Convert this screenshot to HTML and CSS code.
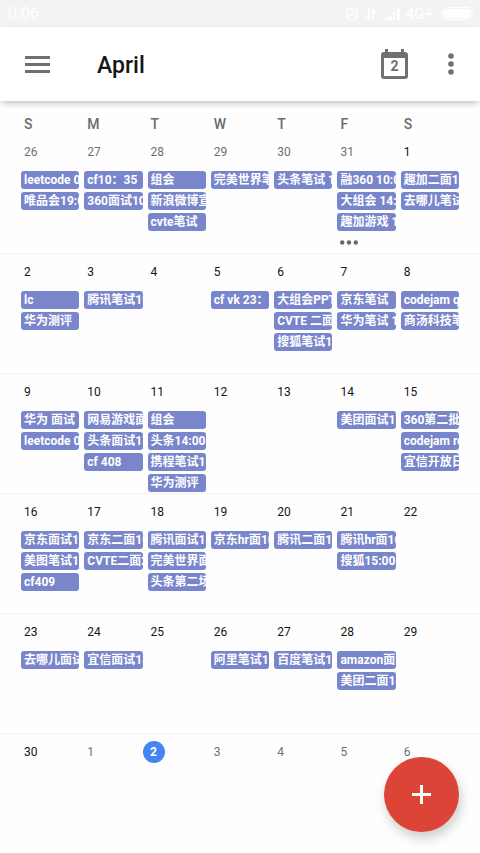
FILE: index.html
```html
<!DOCTYPE html>
<html lang="zh-CN">
<head>
<meta charset="utf-8">
<meta name="viewport" content="width=device-width, initial-scale=1">
<title>April</title>
<link rel="stylesheet" href="styles.css">
</head>
<body>
<div class="status">
  <span class="clock">0:06</span>
  <svg class="status-icon" width="14" height="16" viewBox="0 0 14 16" fill="none" stroke="currentColor" stroke-width="1.300"><circle cx="7" cy="8.500" r="5.500"/><path d="M.8 4 4 1.200M13.200 4 10 1.200M4.500 7.500 7 9.500 10 7"/></svg>
  <svg class="status-icon" width="12" height="14" viewBox="0 0 12 14" fill="currentColor"><path d="M3 1h2v12L0 9h3zM7 13h2V5h3L7 1z"/></svg>
  <svg class="status-icon" width="17" height="14" viewBox="0 0 17 14" fill="currentColor"><path d="M0 13v-1l3-1v2zM4 13v-3h2v3zM7 13V8h2v5zM10 13V5h2v8zM14 13V2h3v11z"/></svg>
  <span class="network">4G+</span>
  <svg class="battery" width="32" height="13" viewBox="0 0 32 13"><rect x=".5" y=".5" width="31" height="12" rx="6" fill="none" stroke="currentColor"/><rect x="2" y="2" width="28" height="9" rx="4.500" fill="currentColor"/></svg>
</div>
<header class="appbar">
  <button class="icon-button" aria-label="Menu"><svg width="25" height="17" viewBox="0 0 25 17" fill="currentColor"><path d="M0 0h25v3H0zM0 7h25v3H0zM0 14h25v3H0z"/></svg></button>
  <h1 class="title">April</h1>
  <button class="icon-button today-button" aria-label="Today">
    <svg width="27" height="30" viewBox="0 0 27 30" fill="currentColor"><path fill-rule="evenodd" d="M4 0h3v3h13V0h3v3h1a3 3 0 0 1 3 3v21a3 3 0 0 1-3 3H3a3 3 0 0 1-3-3V6a3 3 0 0 1 3-3h1zM3 9v18h21V9z"/></svg>
    <span class="today-number">2</span>
  </button>
  <button class="icon-button" aria-label="More options"><svg width="6" height="22" viewBox="0 0 6 22" fill="currentColor"><circle cx="3" cy="3" r="2.800"/><circle cx="3" cy="11" r="2.800"/><circle cx="3" cy="19" r="2.800"/></svg></button>
</header>
<table class="calendar">
  <thead>
    <tr><th>S</th><th>M</th><th>T</th><th>W</th><th>T</th><th>F</th><th>S</th></tr>
  </thead>
  <tbody>
    <tr>
      <td><span class="date other">26</span><a class="event" href="#">leetcode 09:30</a><a class="event" href="#">唯品会19:00</a></td>
      <td><span class="date other">27</span><a class="event" href="#">cf10：35</a><a class="event" href="#">360面试10:00</a></td>
      <td><span class="date other">28</span><a class="event" href="#">组会</a><a class="event" href="#">新浪微博宣讲</a><a class="event" href="#">cvte笔试</a></td>
      <td><span class="date other">29</span><a class="event" href="#">完美世界笔试</a></td>
      <td><span class="date other">30</span><a class="event" href="#">头条笔试 19:00</a></td>
      <td><span class="date other">31</span><a class="event" href="#">融360 10:00</a><a class="event" href="#">大组会 14:00</a><a class="event" href="#">趣加游戏 19:00</a><button class="more" aria-label="More events"><svg width="18" height="5" viewBox="0 0 18 5" fill="currentColor"><circle cx="2.200" cy="2.500" r="2.200"/><circle cx="9" cy="2.500" r="2.200"/><circle cx="15.800" cy="2.500" r="2.200"/></svg></button></td>
      <td><span class="date">1</span><a class="event" href="#">趣加二面10:00</a><a class="event" href="#">去哪儿笔试</a></td>
    </tr>
    <tr>
      <td><span class="date">2</span><a class="event" href="#">lc</a><a class="event" href="#">华为测评</a></td>
      <td><span class="date">3</span><a class="event" href="#">腾讯笔试19:00</a></td>
      <td><span class="date">4</span></td>
      <td><span class="date">5</span><a class="event" href="#">cf vk 23：35</a></td>
      <td><span class="date">6</span><a class="event" href="#">大组会PPT</a><a class="event" href="#">CVTE 二面</a><a class="event" href="#">搜狐笔试19:00</a></td>
      <td><span class="date">7</span><a class="event" href="#">京东笔试</a><a class="event" href="#">华为笔试 19:00</a></td>
      <td><span class="date">8</span><a class="event" href="#">codejam qualification</a><a class="event" href="#">商汤科技笔试</a></td>
    </tr>
    <tr>
      <td><span class="date">9</span><a class="event" href="#">华为 面试</a><a class="event" href="#">leetcode 09:30</a></td>
      <td><span class="date">10</span><a class="event" href="#">网易游戏面试</a><a class="event" href="#">头条面试17:00</a><a class="event" href="#">cf 408</a></td>
      <td><span class="date">11</span><a class="event" href="#">组会</a><a class="event" href="#">头条14:00</a><a class="event" href="#">携程笔试19:00</a><a class="event" href="#">华为测评</a></td>
      <td><span class="date">12</span></td>
      <td><span class="date">13</span></td>
      <td><span class="date">14</span><a class="event" href="#">美团面试17:00</a></td>
      <td><span class="date">15</span><a class="event" href="#">360第二批</a><a class="event" href="#">codejam round</a><a class="event" href="#">宜信开放日</a></td>
    </tr>
    <tr>
      <td><span class="date">16</span><a class="event" href="#">京东面试10:00</a><a class="event" href="#">美图笔试19:00</a><a class="event" href="#">cf409</a></td>
      <td><span class="date">17</span><a class="event" href="#">京东二面10:00</a><a class="event" href="#">CVTE二面20:00</a></td>
      <td><span class="date">18</span><a class="event" href="#">腾讯面试11:00</a><a class="event" href="#">完美世界面试</a><a class="event" href="#">头条第二场</a></td>
      <td><span class="date">19</span><a class="event" href="#">京东hr面10:00</a></td>
      <td><span class="date">20</span><a class="event" href="#">腾讯二面10:00</a></td>
      <td><span class="date">21</span><a class="event" href="#">腾讯hr面10:00</a><a class="event" href="#">搜狐15:00</a></td>
      <td><span class="date">22</span></td>
    </tr>
    <tr>
      <td><span class="date">23</span><a class="event" href="#">去哪儿面试</a></td>
      <td><span class="date">24</span><a class="event" href="#">宜信面试14:00</a></td>
      <td><span class="date">25</span></td>
      <td><span class="date">26</span><a class="event" href="#">阿里笔试19:00</a></td>
      <td><span class="date">27</span><a class="event" href="#">百度笔试19:00</a></td>
      <td><span class="date">28</span><a class="event" href="#">amazon面试</a><a class="event" href="#">美团二面14:00</a></td>
      <td><span class="date">29</span></td>
    </tr>
    <tr>
      <td><span class="date">30</span></td>
      <td><span class="date other">1</span></td>
      <td><span class="date current">2</span></td>
      <td><span class="date other">3</span></td>
      <td><span class="date other">4</span></td>
      <td><span class="date other">5</span></td>
      <td><span class="date other">6</span></td>
    </tr>
  </tbody>
</table>
<button class="fab" aria-label="Add event"><svg width="19" height="19" viewBox="0 0 19 19" fill="currentColor"><path d="M8 0h3v8h8v3h-8v8H8v-8H0V8h8z"/></svg></button>
</body>
</html>
```
FILE: styles.css
```css
* { box-sizing: border-box; }

body {
  margin: 0;
  min-height: 100vh;
  display: flex;
  flex-direction: column;
  background: #fefefe;
  font-family: Roboto, "Noto Sans CJK SC", sans-serif;
  color: #151515;
}

button {
  border: 0;
  padding: 0;
  background: none;
  font: inherit;
  color: inherit;
  cursor: pointer;
}

svg { display: block; }

.status {
  display: flex;
  align-items: center;
  height: 27px;
  padding: 0 7px 0 8px;
  background: #f3f3f3;
  color: #fff;
  font-size: 16px;
}

.clock { margin-right: auto; }
.status-icon { margin-right: 6px; }
.network {
  margin-right: 8px;
  font-size: 15px;
}

.appbar {
  position: relative;
  display: flex;
  align-items: center;
  height: 74px;
  padding: 0 26px 0 25px;
  background: #fff;
  box-shadow: 0 4px 7px -2px rgba(0, 0, 0, 0.25);
}

.icon-button { color: #707070; }

.title {
  flex: 1;
  margin: 0 0 0 47px;
  padding-top: 3px;
  font-size: 23px;
  line-height: 28px;
  font-weight: 500;
}

.today-button {
  position: relative;
  margin-right: 40px;
}

.today-number {
  position: absolute;
  inset: 8px 0 4px;
  font-size: 14px;
  line-height: 18px;
  font-weight: 700;
  text-align: center;
}

.calendar {
  flex: 1;
  display: flex;
  flex-direction: column;
}

.calendar tr {
  display: grid;
  grid-template-columns: repeat(7, minmax(0, 1fr));
  gap: 5px;
  padding: 0 21px;
}

.calendar tbody {
  flex: 1;
  display: grid;
  grid-auto-rows: minmax(120px, 1fr);
}

.calendar tbody tr { border-top: 1px solid #f1f1f1; }
.calendar tbody tr:first-child { border-top-color: transparent; }

th {
  padding: 14px 3px 0;
  font-size: 14px;
  line-height: 18px;
  font-weight: 500;
  text-align: left;
  color: #6b6b6b;
}

td {
  display: flex;
  flex-direction: column;
  gap: 3px;
  padding: 7px 0 0;
}

.date {
  margin-bottom: 5px;
  padding-left: 3px;
  font-size: 12px;
  line-height: 22px;
}

.other { color: #707070; }

.current {
  width: 22px;
  margin-left: -5px;
  padding: 0;
  border-radius: 50%;
  background: #4285f4;
  color: #fff;
  font-weight: 700;
  text-align: center;
}

.event {
  flex: none;
  height: 18px;
  padding-left: 3px;
  overflow: hidden;
  border-radius: 3px;
  background: #7986cb;
  color: #fff;
  font-size: 12px;
  line-height: 18px;
  font-weight: 700;
  text-decoration: none;
  white-space: nowrap;
}

.more {
  align-self: flex-start;
  padding: 6px 3px 0;
  color: #686868;
}

.fab {
  position: fixed;
  right: 21px;
  bottom: 21px;
  width: 75px;
  height: 75px;
  display: grid;
  place-items: center;
  border-radius: 50%;
  background: #db4437;
  color: #fff;
  box-shadow: 2px 6px 12px rgba(0, 0, 0, 0.2);
}
```
